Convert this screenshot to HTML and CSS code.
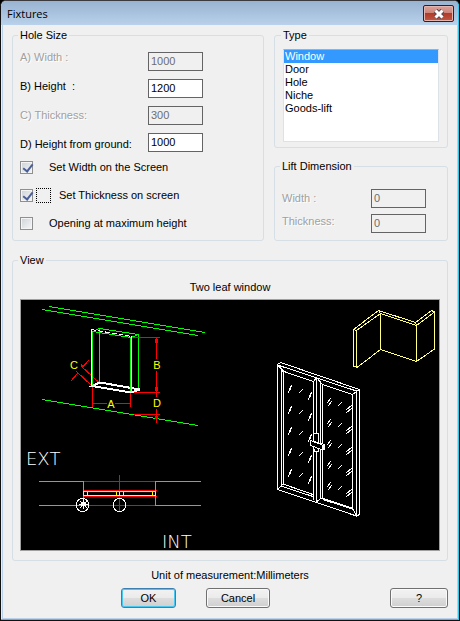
FILE: index.html
```html
<!DOCTYPE html>
<html lang="en">
<head>
<meta charset="utf-8">
<title>Fixtures</title>
<link rel="stylesheet" href="styles.css">
</head>
<body>
<form class="window">
  <header class="titlebar">
    <h1 class="title">Fixtures</h1>
    <button class="close" type="button" aria-label="Close">
      <svg width="12" height="10" viewBox="0 0 12 10"><path class="x-edge" d="M2.500 1.500 9.500 8.500M9.500 1.500 2.500 8.500"/><path class="x-fill" d="M2.500 1.500 9.500 8.500M9.500 1.500 2.500 8.500"/></svg>
    </button>
  </header>

  <main class="content">
    <div class="top">
      <fieldset class="group">
        <legend>Hole Size</legend>
        <div class="fields">
          <div class="labels">
            <label class="off" for="width">A) Width :</label>
            <label for="height">B) Height &nbsp;:</label>
            <label class="off" for="thick">C) Thickness:</label>
            <label for="ground">D) Height from ground:</label>
          </div>
          <div class="inputs">
            <input class="box" id="width" type="text" value="1000" disabled>
            <input class="box" id="height" type="text" value="1200">
            <input class="box" id="thick" type="text" value="300" disabled>
            <input class="box" id="ground" type="text" value="1000">
          </div>
        </div>
        <div class="checks">
          <div class="check"><input id="c1" type="checkbox" checked><label for="c1">Set Width on the Screen</label></div>
          <div class="check focused"><input id="c2" type="checkbox" checked><span class="focus"></span><label for="c2">Set Thickness on screen</label></div>
          <div class="check"><input id="c3" type="checkbox"><label for="c3">Opening at maximum height</label></div>
        </div>
      </fieldset>

      <div class="side">
        <fieldset class="group type">
          <legend>Type</legend>
          <select class="list" size="7" aria-label="Type">
            <option selected>Window</option>
            <option>Door</option>
            <option>Hole</option>
            <option>Niche</option>
            <option>Goods-lift</option>
          </select>
        </fieldset>
        <fieldset class="group grow">
          <legend>Lift Dimension</legend>
          <div class="fields lift">
            <div class="labels">
              <label class="off" for="lw">Width :</label>
              <label class="off" for="lt">Thickness:</label>
            </div>
            <div class="inputs">
              <input class="box" id="lw" type="text" value="0" disabled>
              <input class="box" id="lt" type="text" value="0" disabled>
            </div>
          </div>
        </fieldset>
      </div>
    </div>

    <fieldset class="group view">
      <legend>View</legend>
      <p class="caption">Two leaf window</p>
      <svg class="drawing" viewBox="21 300 418 250" role="img" aria-label="Two leaf window">
        <defs>
          <path id="pair" d="M-1 1 2 -4M-2 4 1 -1"/>
          <path id="single" d="M-2 2 2 -2"/>
          <path id="wide" d="M-3 1 1 -4M-2 4 2 -1"/>
          <path id="edge" d="M-3 1 3 -4M-3 4 3 -1"/>
          <g id="left-row">
            <use href="#pair" x="290" y="389"/><use href="#single" x="301" y="391"/><use href="#pair" x="310" y="396"/>
          </g>
          <g id="right-row">
            <use href="#wide" x="330" y="402"/><use href="#single" x="340" y="404"/><use href="#edge" x="349" y="409"/>
          </g>
        </defs>

        <g class="green">
          <path d="M49 306.500 205 332.500M42 309.500 198 335.500M42 399.500 198 425.500"/>
          <path d="M92.500 331.500 99.500 328.500 138.500 334.500V389M99.500 328.500V382M92.500 331.500 131 337.500 138.500 334.500"/>
        </g>
        <g class="red">
          <path d="M131 337.500H160M131 392.500H160M134 414.500H160M156.500 337V359M156.500 371V397M156.500 409V423"/>
          <path d="M92.500 387V407M130.500 393V407M92 403.500H107M115 403.500H131"/>
          <path d="M81 366 99.500 383M76 371 92 386M71 381 78 373M82 368 89 360M81 364 83 367"/>
          <path d="M155.500 339.500H157.500V342.500H155.500ZM155.500 387.500H157.500V390.500H155.500ZM155.500 416.500H157.500V418.500H155.500Z"/>
        </g>
        <g class="white">
          <path d="M91.500 329V386M131.500 336V392"/>
          <path d="M91 329.500 131.500 336.500" stroke-dasharray="5 2"/>
          <path class="heavy" d="M92 386 100 382.500 140 389.500 131 392.500Z"/>
        </g>
        <path class="green" d="M92.500 331V385M130.500 337V391"/>
        <g class="mark">
          <text x="111" y="408">A</text><text x="157" y="369">B</text><text x="74" y="369">C</text><text x="157" y="407">D</text>
        </g>

        <text class="name" x="26" y="465">EXT</text>
        <text class="name" x="162" y="548">INT</text>
        <path class="red" d="M83 481.500H155M83 505.500H155M83 490.500H157M83 496.500H157M119.500 475V511"/>
        <path class="green" d="M39 481.500H83.500V505.500H39M201 481.500H155.500V505.500H201"/>
        <path class="yellow" d="M83.500 491.500H155.500V495.500H83.500ZM87.500 491V495M116.500 491V495M119.500 491V495M123.500 491V495M152.500 491V495"/>
        <g class="white">
          <circle cx="82.500" cy="505" r="6.500"/><circle cx="119.500" cy="505" r="6.500"/>
          <path d="M83.500 499V509M79 504.500H88M80 501 87 508M87 501 80 508"/>
          <path d="M81.500 502.500H85.500V505.500H81.500Z"/>
        </g>

        <g class="pale">
          <path d="M353.500 329.500 378.500 310.500 415.500 322.500 431.500 310.500 434.500 312V349L416.500 361.500 380.500 349.500 357 367.500 353.500 366Z"/>
          <path d="M353.500 329.500 356.500 330.500 380.500 313.500 416.500 325.500 434.500 312M378.500 310.500 380.500 313.500M415.500 322.500 416.500 325.500"/>
          <path d="M356.500 330V367M380.500 313V349M416.500 325V361"/>
        </g>

        <g class="white">
          <path d="M277.500 364.500 280.500 362.500 359.500 389.500V514.500L356.500 516 316.500 502.500 277.500 489.500Z"/>
          <path d="M277.500 365 356.500 391M356.500 391V516M356.500 391 359.500 389.500"/>
          <path d="M281.500 370V485M283.500 371V484M313.500 381V500M316.500 378V502M320.500 383V498M322.500 385V498M352.500 394V508"/>
          <path d="M281 370.500 313.500 381.500M322.500 384.500 352.500 394.500M277.500 365 283.500 371M313.500 381.500 316.500 377.500 322.500 384.500M352.500 394.500 357 391"/>
          <path d="M283 484 313 494.500M281 486 313 496.500M277.500 489.500 283 484M316.500 502 321 498 352.500 508.500 356.500 516"/>
          <path class="heavy" d="M323 499 352 508.500"/>
        </g>
        <g class="white">
          <use href="#left-row"/><use href="#left-row" y="21"/><use href="#left-row" y="42"/><use href="#left-row" y="63"/><use href="#left-row" y="84"/>
          <use href="#right-row"/><use href="#right-row" y="21"/><use href="#right-row" y="42"/><use href="#right-row" y="63"/><use href="#right-row" y="84"/>
        </g>
        <g class="white handle">
          <path d="M313.500 433.500H318.500V451.500H314.500V449"/>
          <path d="M313.500 433.500V441M310.500 440.500 324.500 444.500V449.500H321.500L310.500 445.500Z"/>
          <path d="M322.500 445V449M323.500 445V449M313 441.500 322 444.500"/>
        </g>
      </svg>
    </fieldset>

    <p class="unit">Unit of measurement:Millimeters</p>
    <div class="actions">
      <button class="btn ok" type="button">OK</button>
      <button class="btn cancel" type="button">Cancel</button>
      <button class="btn help" type="button">?</button>
    </div>
  </main>
</form>
</body>
</html>
```
FILE: styles.css
```css
* { box-sizing: border-box; }

body {
  margin: 0;
  background: #000;
  font: 11px/13px "Liberation Sans", Arial, sans-serif;
  color: #000;
}

p, h1 { margin: 0; font: inherit; }

.window {
  display: flex;
  flex-direction: column;
  min-height: 100vh;
  border: 1px solid #111;
  border-top-color: #3b3b3f;
  border-radius: 6px 6px 0 0;
  background: #f0f0f0;
  box-shadow: inset -1px -1px #35c5e8, inset 1px 0 #e4effa, inset -2px -2px #b9d1ea, inset 2px 0 #b9d1ea;
}

.titlebar {
  display: flex;
  justify-content: space-between;
  align-items: flex-start;
  height: 24px;
  padding: 4px 4px 0 6px;
  border-radius: 5px 5px 0 0;
  border-right: 1px solid #35c5e8;
  background: linear-gradient(#98b3d1, #b9d1ea);
}

.title {
  font: 11px/18px "Open Sans", "Noto Sans", sans-serif;
}

.close {
  display: grid;
  place-items: center;
  width: 31px;
  height: 17px;
  padding: 0;
  border: 1px solid #4b1414;
  border-radius: 2px;
  background: linear-gradient(#dba39b, #cf8278 48%, #b23a28 50%, #bd5a45);
  box-shadow: inset 0 0 0 1px #e3b5ae;
}

.close path { fill: none; }
.x-edge { stroke: #5b4a55; stroke-width: 5; }
.x-fill { stroke: #fff; stroke-width: 3; }

.content {
  flex: 1;
  display: flex;
  flex-direction: column;
  padding: 4px 11px 10px;
}

.top {
  display: grid;
  grid-template-columns: 252fr 174fr;
  gap: 10px;
}

.side { display: flex; flex-direction: column; gap: 12px; }

.group {
  min-width: 0;
  margin: 0;
  padding: 0 7px 9px;
  border: 1px solid #d5dfe5;
  border-radius: 3px;
}

.grow { flex: 1; padding-bottom: 0; }

legend { margin-left: -2px; padding: 0 2px; line-height: 13px; }

.type { padding: 7px 8px 5px; }

.fields {
  display: grid;
  grid-template-columns: 128px 55px;
  padding-top: 9px;
}

.labels { display: flex; flex-direction: column; gap: 16px; white-space: nowrap; }
.inputs { display: flex; flex-direction: column; gap: 8px; padding-top: 1px; }

.lift { grid-template-columns: 89px 55px; padding-top: 15px; }
.lift .labels { gap: 10px; padding-top: 4px; }
.lift .inputs { gap: 6px; }

.off { color: #a0a0a0; text-shadow: 1px 1px #fff; }

.box {
  width: 55px;
  height: 19px;
  padding: 0 2px 2px;
  border: 1px solid #646464;
  background: #fff;
  font: inherit;
  color: #000;
}

.box:disabled { background: #f0f0f0; color: #6d6d6d; }

.checks { display: flex; flex-direction: column; gap: 13px; padding-top: 8px; }
.check { display: flex; align-items: center; height: 15px; gap: 16px; }
.focused { gap: 8px; }
.focused .focus { margin-left: -5px; }

.check input {
  appearance: none;
  width: 13px;
  height: 13px;
  margin: 0;
  border: 1px solid #8e8f8f;
  background: linear-gradient(135deg, #cdd2d8, #f6f6f6);
  box-shadow: inset 0 0 0 1px #f4f4f4;
}

.check input:checked::after {
  content: "";
  display: block;
  width: 4px;
  height: 8px;
  margin: 0 0 0 4px;
  border: solid #4a5f97;
  border-width: 0 2px 2px 0;
  transform: rotate(38deg);
}

.focus { width: 15px; height: 15px; border: 1px dotted #000; }

.list {
  display: block;
  width: 100%;
  height: 93px;
  padding: 0;
  border: 1px solid #dde2e8;
  border-top-color: #abadb3;
  border-radius: 0;
  outline: 0;
  background: #fff;
  font: inherit;
  color: #000;
  overflow: hidden;
}

.list option { height: 13px; min-height: 13px; padding: 0 1px; line-height: 13px; }
.list option:checked { background: linear-gradient(#39f, #39f); color: #fff; }

.view { margin-top: 13px; }
.caption { padding: 14px 0 5px; text-align: center; }

.drawing {
  display: block;
  width: 100%;
  height: auto;
  border: 1px solid #a0a0a0;
  background: #000;
  shape-rendering: crispEdges;
}

.drawing path, .drawing circle { fill: none; }
.green { stroke: #0f0; }
.red { stroke: #f00; }
.yellow { stroke: #ff0; }
.white { stroke: #fff; }
.pale { stroke: #ffff80; }
.heavy { stroke-width: 2; }
.drawing .handle path { fill: #000; }
.mark { fill: #ff0; font: 11px "Liberation Sans", sans-serif; text-anchor: middle; }
.name { fill: #fff; font: 200 18px "DejaVu Sans", sans-serif; }

.unit { padding-top: 8px; text-align: center; }

.actions { display: flex; gap: 30px; padding: 6px 0 0 109px; }

.btn {
  width: 64px;
  height: 20px;
  padding: 0;
  border: 1px solid #707070;
  border-radius: 3px;
  background: linear-gradient(#f2f2f2, #ebebeb 49%, #dddddd 50%, #cfcfcf);
  box-shadow: inset 0 0 0 1px #fafafa;
  font: inherit;
  color: #000;
}

.ok { width: 55px; border-color: #3c7fb1; box-shadow: inset 0 0 0 1px #48c8f0; }
.help { width: 58px; margin-left: auto; }
```
